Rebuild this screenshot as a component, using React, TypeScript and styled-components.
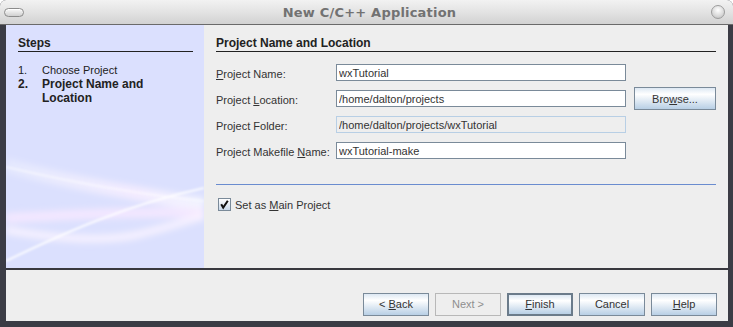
import React from "react";
import styled, { createGlobalStyle } from "styled-components";

const GlobalStyle = createGlobalStyle`
  html, body {
    margin: 0;
    padding: 0;
    background: #ffffff;
  }
  body {
    font-family: "Liberation Sans", Arial, sans-serif;
    font-size: 11px;
    color: #333333;
  }
`;

const steps = [
  { num: "1.", label: "Choose Project", current: false },
  { num: "2.", label: "Project Name and Location", current: true },
];

export default function App() {
  return (
    <>
      <GlobalStyle />
      <Frame>
        <TitleBar>
          <MenuPill />
          <Title>New C/C++ Application</Title>
          <CloseKnob />
        </TitleBar>
        <Body>
          <Main>
            <StepsPanel>
              <Waves />
              <PanelHeading>Steps</PanelHeading>
              <StepList>
                {steps.map((step) => (
                  <StepItem key={step.num} $current={step.current}>
                    <StepNum>{step.num}</StepNum>
                    <span>{step.label}</span>
                  </StepItem>
                ))}
              </StepList>
            </StepsPanel>
            <FormPanel>
              <PanelHeading>Project Name and Location</PanelHeading>
              <FieldGrid>
                <Label>
                  <u>P</u>roject Name:
                </Label>
                <Field value="wxTutorial" />
                <span />
                <Label>
                  Project <u>L</u>ocation:
                </Label>
                <Field value="/home/dalton/projects" />
                <Button $wide>
                  Bro<u>w</u>se...
                </Button>
                <Label>Project Folder:</Label>
                <Field value="/home/dalton/projects/wxTutorial" disabled />
                <span />
                <Label>
                  Project Makefile <u>N</u>ame:
                </Label>
                <Field value="wxTutorial-make" />
                <span />
              </FieldGrid>
              <Separator />
              <CheckRow>
                <CheckBox>
                  <svg width="11" height="11" viewBox="0 0 11 11">
                    <path
                      d="M2.2 5.2 L4.2 8.6 L8.8 1.8"
                      fill="none"
                      stroke="#111"
                      strokeWidth="2"
                    />
                  </svg>
                </CheckBox>
                <span>
                  Set as <u>M</u>ain Project
                </span>
              </CheckRow>
            </FormPanel>
          </Main>
          <ButtonBar>
            <Button>
              &lt; <u>B</u>ack
            </Button>
            <Button disabled>Next &gt;</Button>
            <Button $default>
              <u>F</u>inish
            </Button>
            <Button>Cancel</Button>
            <Button>
              <u>H</u>elp
            </Button>
          </ButtonBar>
        </Body>
      </Frame>
    </>
  );
}

function Waves() {
  return (
    <WaveSvg viewBox="0 0 198 243" preserveAspectRatio="none">
      <defs>
        <filter id="soft" x="-20%" y="-50%" width="140%" height="200%">
          <feGaussianBlur stdDeviation="3" />
        </filter>
        <filter id="softer" x="-20%" y="-50%" width="140%" height="200%">
          <feGaussianBlur stdDeviation="1" />
        </filter>
        <linearGradient id="band" x1="0" x2="1" y1="0" y2="0">
          <stop offset="0" stopColor="#ffffff" stopOpacity="0.35" />
          <stop offset="0.65" stopColor="#fdf0ff" stopOpacity="0.95" />
          <stop offset="1" stopColor="#ffffff" stopOpacity="0.85" />
        </linearGradient>
      </defs>
      <g filter="url(#soft)" fill="none">
        <path
          d="M0 140 C50 155 110 165 198 180"
          stroke="url(#band)"
          strokeWidth="14"
          opacity="0.75"
        />
        <path
          d="M0 193 C70 190 130 186 198 188"
          stroke="#fbeaff"
          strokeWidth="10"
          opacity="0.75"
        />
        <path
          d="M0 205 C40 212 90 218 130 210 C160 203 180 196 198 191"
          stroke="#fff6ff"
          strokeWidth="8"
          opacity="0.7"
        />
      </g>
      <g filter="url(#softer)" fill="none">
        <path
          d="M0 236 C60 207 120 180 198 163"
          stroke="#ffffff"
          strokeWidth="2"
          opacity="0.85"
        />
        <path
          d="M0 142 C60 156 120 168 198 176"
          stroke="#ffffff"
          strokeWidth="1.5"
          opacity="0.6"
        />
      </g>
    </WaveSvg>
  );
}

const Frame = styled.div`
  width: 733px;
  height: 327px;
  display: flex;
  flex-direction: column;
  background: #3b3c45;
  border-radius: 6px 6px 0 0;
  overflow: hidden;
`;

const TitleBar = styled.div`
  height: 24px;
  flex: none;
  display: flex;
  align-items: center;
  padding: 0 8px 0 4px;
  background: linear-gradient(#f2f2f2, #e3e3e3 50%, #d2d2d2);
  border-bottom: 1px solid #6a6a6a;
`;

const MenuPill = styled.div`
  width: 18px;
  height: 7px;
  border: 1px solid #8c8c8c;
  border-radius: 5px;
  background: linear-gradient(#fafafa, #d0d0d0);
  box-shadow: inset 0 1px 0 #ffffff;
  margin-top: 1px;
`;

const Title = styled.div`
  flex: 1;
  text-align: center;
  font-family: "DejaVu Sans", sans-serif;
  font-weight: bold;
  font-size: 13px;
  color: #727272;
  letter-spacing: 0.2px;
  padding-left: 4px;
`;

const CloseKnob = styled.div`
  width: 12px;
  height: 12px;
  border-radius: 50%;
  border: 1px solid #9c9c9c;
  background: radial-gradient(circle at 50% 35%, #ffffff, #d8d8d8 60%, #b8b8b8);
`;

const Body = styled.div`
  flex: 1;
  margin: 0 5px 6px 6px;
  display: flex;
  flex-direction: column;
  background: #eeeeee;
`;

const Main = styled.div`
  height: 243px;
  display: flex;
  border-bottom: 2px solid #38383e;
`;

const StepsPanel = styled.div`
  position: relative;
  width: 198px;
  flex: none;
  padding: 11px 11px 0 12px;
  box-sizing: border-box;
  background: #dbe0fe;
  overflow: hidden;
`;

const WaveSvg = styled.svg`
  position: absolute;
  inset: 0;
  width: 100%;
  height: 100%;
`;

const PanelHeading = styled.div`
  position: relative;
  font-weight: bold;
  font-size: 12px;
  line-height: 14px;
  color: #222222;
  padding-bottom: 1px;
  border-bottom: 1px solid #222222;
`;

const StepList = styled.div`
  position: relative;
  margin-top: 11px;
  display: flex;
  flex-direction: column;
`;

const StepItem = styled.div<{ $current: boolean }>`
  display: flex;
  font-size: ${({ $current }) => ($current ? "12px" : "11px")};
  font-weight: ${({ $current }) => ($current ? "bold" : "normal")};
  line-height: 14px;
  color: #222222;
`;

const StepNum = styled.span`
  width: 24px;
  flex: none;
`;

const FormPanel = styled.div`
  flex: 1;
  min-width: 0;
  padding: 11px 12px 0 12px;
  display: flex;
  flex-direction: column;
`;

const FieldGrid = styled.div`
  margin-top: 12px;
  display: grid;
  grid-template-columns: 112px 290px 82px;
  grid-template-rows: repeat(4, 17px);
  column-gap: 8px;
  row-gap: 9px;
  align-items: center;
`;

const Label = styled.span`
  color: #333333;
  white-space: nowrap;
  padding-top: 2px;
`;

const Field = styled.input.attrs({ readOnly: true })`
  box-sizing: border-box;
  height: 17px;
  width: 100%;
  margin: 0;
  padding: 0 2px;
  font-family: "Liberation Sans", Arial, sans-serif;
  font-size: 11px;
  color: #333333;
  background: #ffffff;
  border: 1px solid #7a8a99;
  outline: none;

  &:disabled {
    background: #eeeeee;
    border-color: #b8cfe5;
    color: #333333;
  }
`;

const Button = styled.button<{ $default?: boolean; $wide?: boolean }>`
  box-sizing: border-box;
  height: 23px;
  width: ${({ $wide }) => ($wide ? "82px" : "66px")};
  margin: 0;
  padding: 0;
  align-self: center;
  font-family: "Liberation Sans", Arial, sans-serif;
  font-size: 11px;
  color: #333333;
  border: ${({ $default }) =>
    $default ? "2px solid #6b7b8a" : "1px solid #7a8a99"};
  background: linear-gradient(#dde8f3 0%, #ffffff 30%, #b8cfe5 100%);
  white-space: nowrap;

  &:disabled {
    background: #eeeeee;
    border-color: #b8b8b8;
    color: #8e8e8e;
  }
`;

const Separator = styled.div`
  margin-top: 25px;
  border-top: 1px solid #6a8ccf;
`;

const CheckRow = styled.label`
  margin-top: 13px;
  margin-left: 2px;
  display: flex;
  align-items: center;
  gap: 4px;
  color: #333333;
`;

const CheckBox = styled.span`
  box-sizing: border-box;
  width: 13px;
  height: 13px;
  border: 1px solid #7a8a99;
  background: linear-gradient(#ffffff, #c8d8ea);
  display: flex;
  align-items: center;
  justify-content: center;
`;

const ButtonBar = styled.div`
  flex: 1;
  display: flex;
  justify-content: flex-end;
  align-items: flex-start;
  gap: 6px;
  padding: 17px 11px 0 0;
`;
